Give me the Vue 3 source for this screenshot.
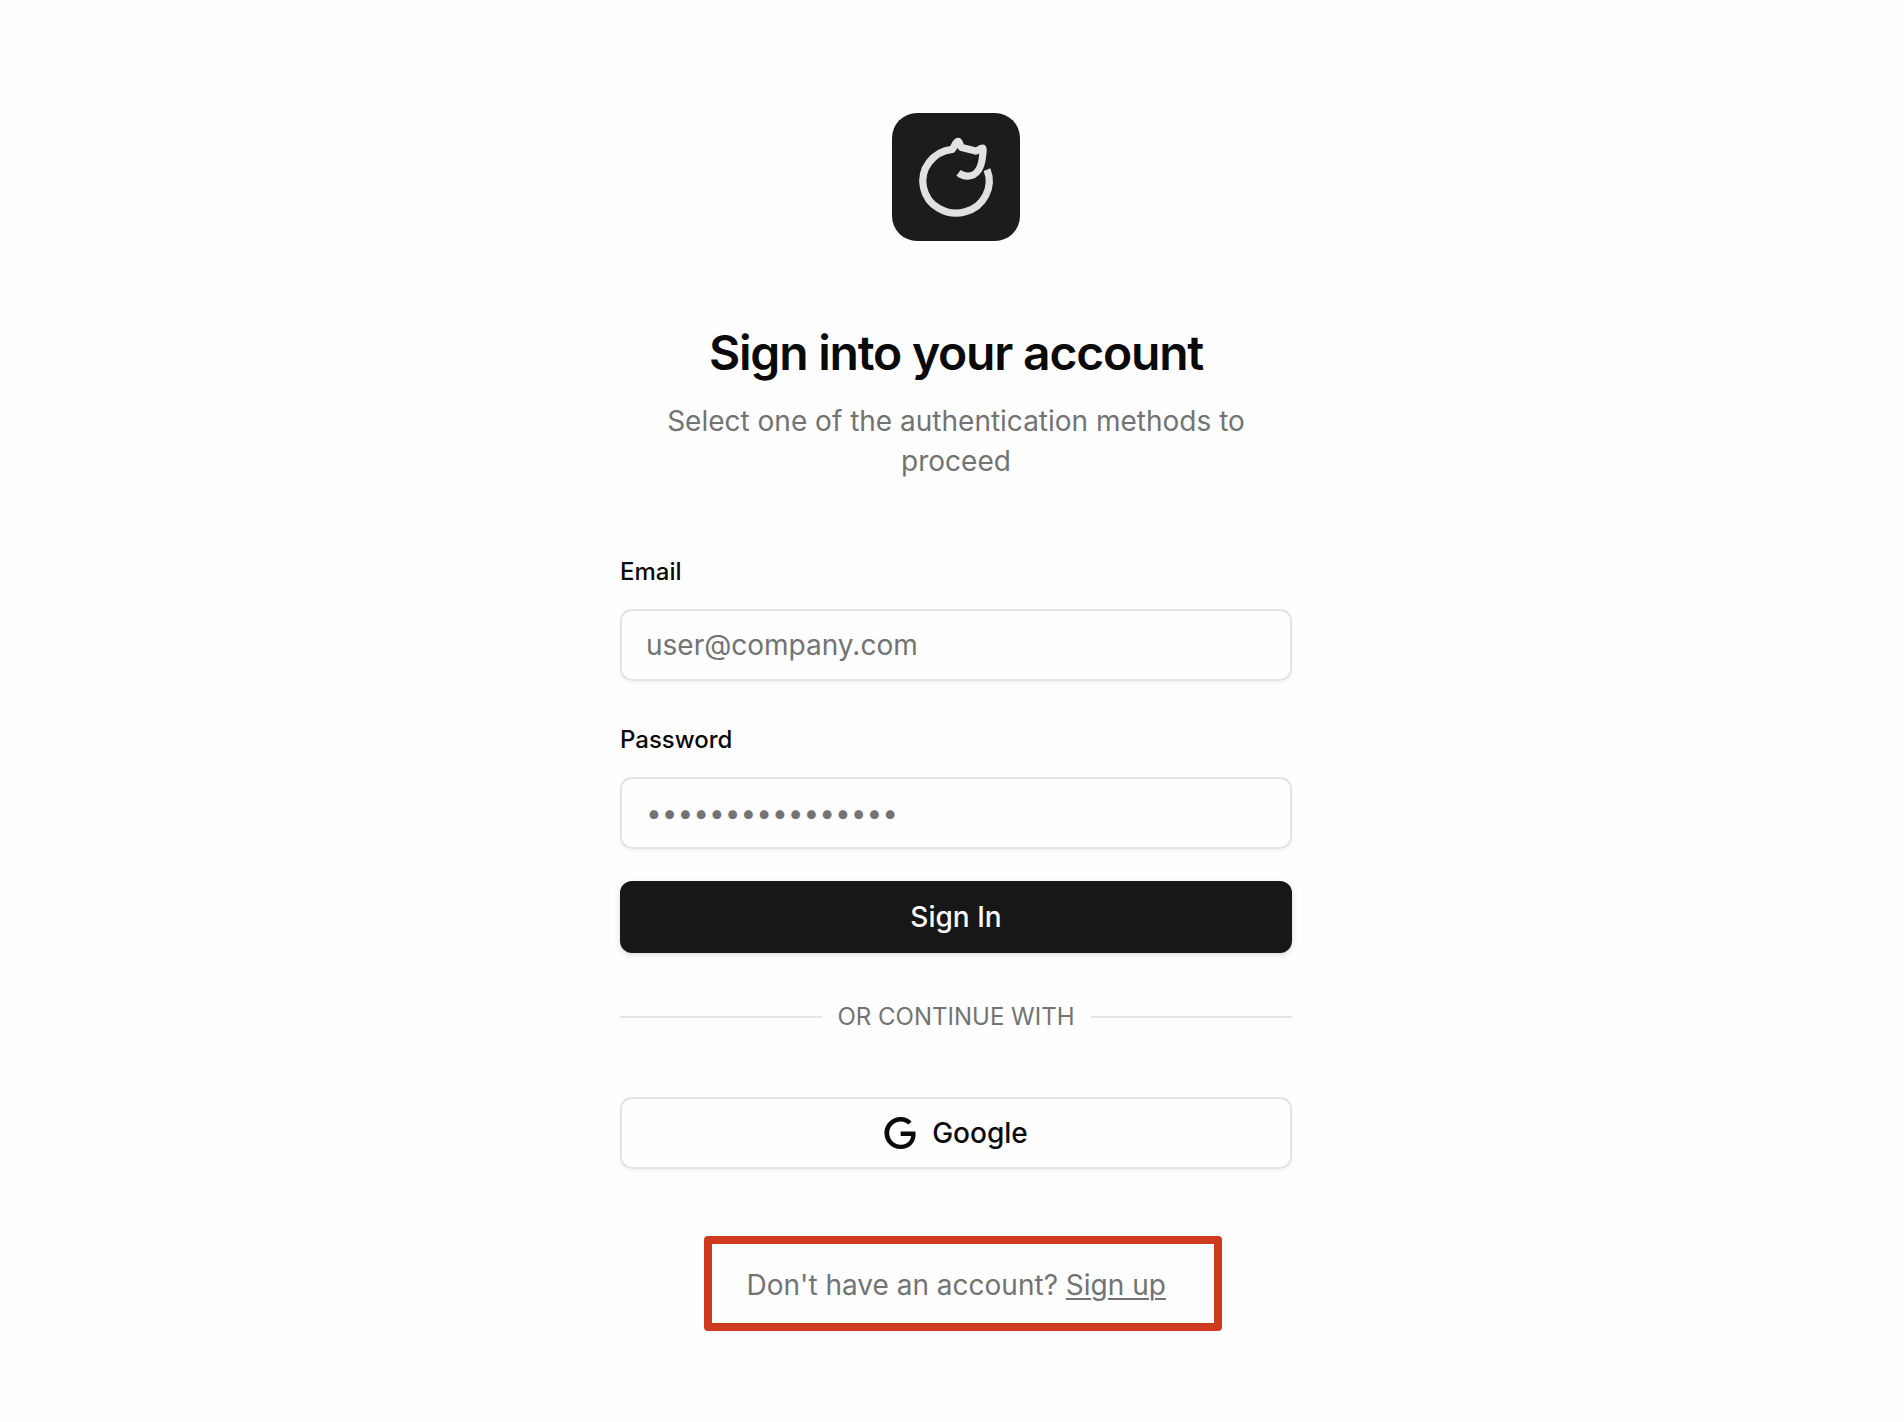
<script setup>
const passwordHint = '•'.repeat(16)
</script>

<template>
  <main class="page">
    <svg class="logo" viewBox="0 0 128 128" role="img" aria-label="Logo">
      <rect width="128" height="128" rx="25" fill="#1c1c1c" />
      <path
        d="M95 56.600A33.200 32 0 1 1 60.200 36.300C62.300 34.300 63.600 28.400 66 28.300C68.300 28.300 67.600 33.500 69.700 34.500L83.800 38.100C85.800 38.400 87.500 35 90.200 35C91.900 35 90.900 39.500 90.500 43.500C89.500 54.500 85 62.900 76 63.100C72 63.200 69.200 62 66.500 59.900"
        fill="none"
        stroke="#e1e1e1"
        stroke-width="7.2"
        stroke-linejoin="round"
      />
    </svg>

    <header class="intro">
      <h1>Sign into your account</h1>
      <p>Select one of the authentication methods to proceed</p>
    </header>

    <form class="form" @submit.prevent>
      <div class="field">
        <label for="email">Email</label>
        <input id="email" type="email" placeholder="user@company.com" />
      </div>
      <div class="field">
        <label for="password">Password</label>
        <input id="password" type="password" :placeholder="passwordHint" />
      </div>
      <button class="button primary" type="submit">Sign In</button>
    </form>

    <div class="divider"><span>OR CONTINUE WITH</span></div>

    <button class="button outline" type="button">
      <svg class="google" viewBox="0 0 24 24" aria-hidden="true">
        <path
          fill="currentColor"
          d="M12.48 10.92v3.28h7.84c-.24 1.84-.853 3.187-1.787 4.133-1.147 1.147-2.933 2.4-6.053 2.4-4.827 0-8.6-3.893-8.6-8.72s3.773-8.72 8.6-8.72c2.6 0 4.507 1.027 5.907 2.347l2.307-2.307C18.747 1.440 16.133 0 12.480 0 5.867 0 .307 5.387.307 12s5.560 12 12.173 12c3.573 0 6.267-1.173 8.373-3.360 2.160-2.160 2.840-5.213 2.840-7.667 0-.760-.053-1.467-.173-2.053H12.480z"
        />
      </svg>
      Google
    </button>

    <div class="signup">
      <p>Don't have an account? <a href="#">Sign up</a></p>
    </div>
  </main>
</template>

<style>
body {
  background: #fefefe;
}
</style>

<style scoped>
.page {
  box-sizing: border-box;
  width: 680px;
  height: 1422px;
  margin: 0 auto;
  padding: 113px 0 0 8px;
  display: flex;
  flex-direction: column;
  font-family: Inter, "Liberation Sans", sans-serif;
  font-size: 28px;
  line-height: 40px;
  color: #0a0a0a;
}

.logo {
  width: 128px;
  height: 128px;
  align-self: center;
}

.intro {
  margin-top: 80px;
  text-align: center;
}

h1 {
  margin: 0 0 16px;
  font-size: 48px;
  line-height: 64px;
  font-weight: 600;
  letter-spacing: -1.2px;
}

.intro p {
  margin: 0 auto;
  width: 608px;
  color: #737373;
}

.form {
  margin-top: 79px;
  display: flex;
  flex-direction: column;
  gap: 32px;
}

.field {
  display: flex;
  flex-direction: column;
  gap: 25px;
}

.field + .field {
  margin-top: 15px;
}

label {
  font-size: 24px;
  line-height: 24px;
  font-weight: 500;
}

.field input {
  box-sizing: border-box;
  height: 72px;
  width: 100%;
  border: 2px solid #e4e4e7;
  border-radius: 12px;
  padding: 0 24px;
  background: transparent;
  color: inherit;
  font: inherit;
  box-shadow: 0 2px 4px rgba(0, 0, 0, 0.05);
}

.field input::placeholder {
  color: #737373;
  opacity: 1;
}

.button {
  box-sizing: border-box;
  height: 72px;
  width: 100%;
  border: 0;
  border-radius: 12px;
  display: flex;
  align-items: center;
  justify-content: center;
  gap: 16px;
  font: inherit;
  font-weight: 500;
}

.primary {
  background: #171717;
  color: #fafafa;
  box-shadow: 0 2px 6px rgba(0, 0, 0, 0.14);
}

.outline {
  border: 2px solid #e4e4e7;
  background: transparent;
  color: #0a0a0a;
  box-shadow: 0 2px 4px rgba(0, 0, 0, 0.05);
}

.google {
  width: 32px;
  height: 32px;
}

.divider {
  margin: 48px 0 64px;
  display: flex;
  align-items: center;
  gap: 16px;
  font-size: 24px;
  line-height: 32px;
  color: #737373;
}

.divider::before,
.divider::after {
  content: "";
  flex: 1;
  height: 2px;
  background: #e4e4e7;
}

.signup {
  box-sizing: border-box;
  width: 518px;
  height: 95px;
  margin: 67px 0 0 84px;
  border: 8px solid #cd3a20;
  border-radius: 4px;
  padding: 21px 0 0 34.5px;
  color: #737373;
}

.signup p {
  margin: 0;
  white-space: nowrap;
}

.signup a {
  color: inherit;
  text-decoration: underline;
  text-decoration-thickness: 2px;
  text-underline-offset: 3px;
}
</style>
